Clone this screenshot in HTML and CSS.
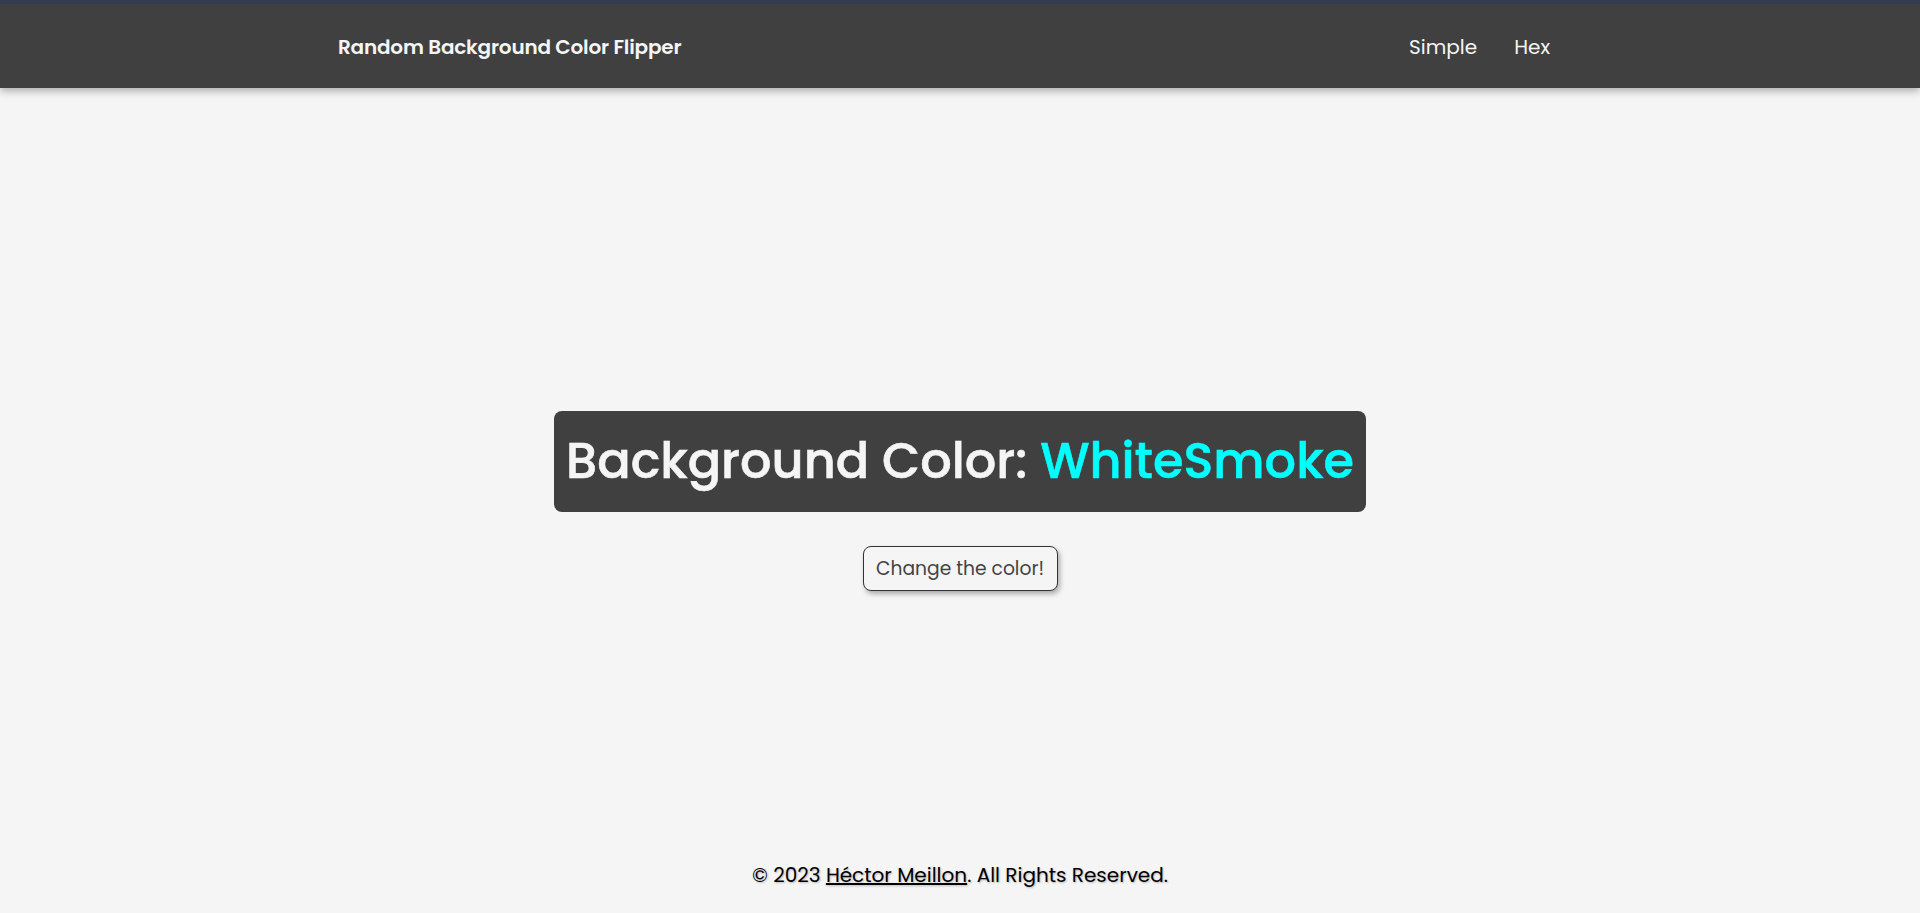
FILE: index.html
```html
<!DOCTYPE html>
<html lang="en">
<head>
<meta charset="utf-8">
<title>Random Background Color Flipper</title>
<link rel="stylesheet" href="styles.css">
</head>
<body>
<nav class="navbar">
  <div class="nav-inner">
    <a class="brand" href="#">Random Background Color Flipper</a>
    <ul class="nav-links">
      <li><a href="#">Simple</a></li>
      <li><a href="#">Hex</a></li>
    </ul>
  </div>
</nav>
<main class="main">
  <h1 class="color-title">Background Color: <span class="color-name">WhiteSmoke</span></h1>
  <button class="btn">Change the color!</button>
</main>
<footer class="footer">
  <p>© 2023 <a href="#">Héctor Meillon</a>. All Rights Reserved.</p>
</footer>
</body>
</html>
```
FILE: styles.css
```css
* { box-sizing: border-box; }
html, body { margin: 0; padding: 0; }
body {
  font-family: "Poppins", "Inter", "Open Sans", sans-serif;
  background: whitesmoke;
  height: 100vh;
  display: flex;
  flex-direction: column;
  overflow: hidden;
}
.navbar {
  background: #404040;
  border-top: 4px solid #343a4f;
  height: 88px;
  box-shadow: 0 3px 8px rgba(0,0,0,0.3);
  flex: none;
  position: relative;
  z-index: 1;
}
.nav-inner {
  width: 1244px;
  margin: 0 auto;
  height: 100%;
  display: flex;
  align-items: center;
  justify-content: space-between;
  padding-top: 2px;
}
.brand {
  color: #f5f5f5;
  text-decoration: none;
  font-weight: 600;
  font-size: 20px;
  letter-spacing: -0.2px;
}
.nav-links {
  list-style: none;
  margin: 0;
  padding: 0 32px 0 0;
  display: flex;
  gap: 37px;
}
.nav-links a {
  color: #f5f5f5;
  text-decoration: none;
  font-size: 20px;
}
.main {
  flex: 1;
  display: flex;
  flex-direction: column;
  align-items: center;
  justify-content: center;
  padding-top: 76px;
  gap: 34px;
}
.color-title {
  margin: 0;
  background: #404040;
  color: #f5f5f5;
  border-radius: 8px;
  font-size: 49.4px;
  font-weight: 500;
  -webkit-text-stroke: 0.6px #f5f5f5;
  line-height: 72px;
  padding: 14px 12px 15px;
}
.color-name {
  color: #00ffff;
  -webkit-text-stroke: 0.6px #00ffff;
}
.btn {
  font-family: inherit;
  font-size: 18.7px;
  color: #444;
  background: whitesmoke;
  border: 1px solid #333;
  border-radius: 8px;
  width: 195px;
  height: 45px;
  padding: 0;
  box-shadow: 2px 3px 5px rgba(0,0,0,0.3);
  cursor: pointer;
}
.footer {
  height: 76px;
  flex: none;
  display: flex;
  align-items: center;
  justify-content: center;
}
.footer p {
  margin: 0;
  font-size: 20px;
  color: #000;
  text-shadow: 1px 1px 2px rgba(0,0,0,0.25);
}
.footer a { color: #000; }
```
